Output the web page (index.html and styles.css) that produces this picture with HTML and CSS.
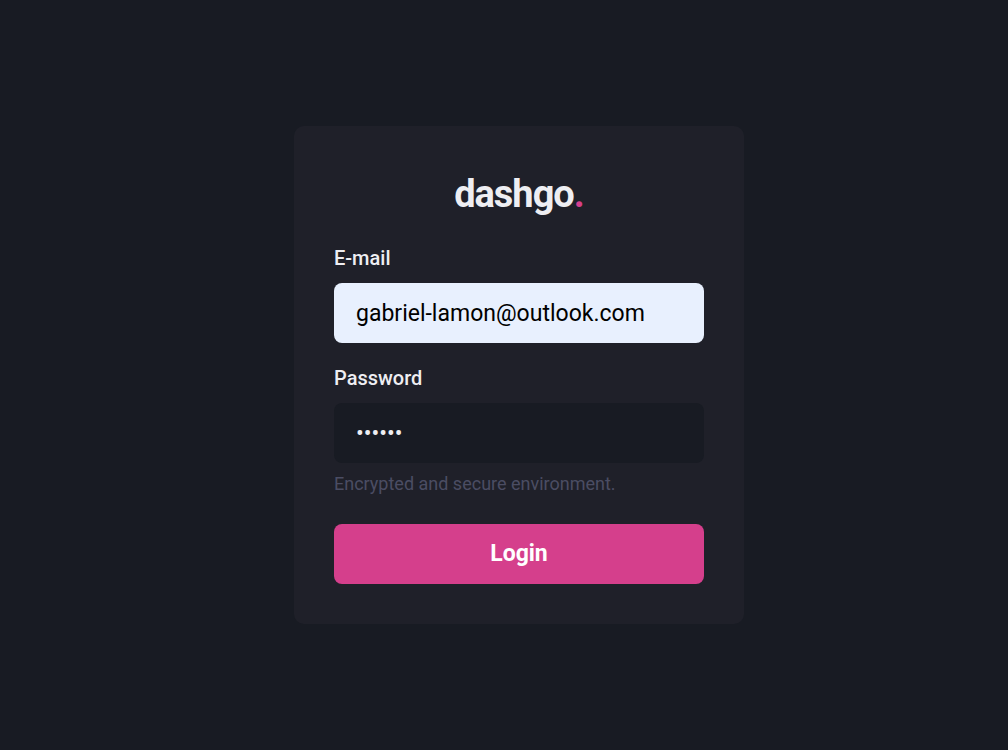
FILE: index.html
```html
<!DOCTYPE html>
<html lang="en">
<head>
<meta charset="utf-8">
<meta name="viewport" content="width=device-width, initial-scale=1">
<title>dashgo</title>
<link rel="stylesheet" href="styles.css">
</head>
<body>
<main class="page">
  <form class="card">
    <h1 class="logo">dashgo<span class="logo-dot">.</span></h1>
    <div class="field">
      <label class="label" for="email">E-mail</label>
      <input class="input input-filled" id="email" type="email" value="gabriel-lamon@outlook.com">
    </div>
    <div class="field">
      <label class="label" for="password">Password</label>
      <input class="input" id="password" type="password" value="secret" aria-describedby="hint">
      <p class="hint" id="hint">Encrypted and secure environment.</p>
    </div>
    <button class="button" type="submit">Login</button>
  </form>
</main>
</body>
</html>
```
FILE: styles.css
```css
* {
  box-sizing: border-box;
}

body {
  margin: 0;
  background: #181b23;
  color: #eeeef2;
  font-family: Roboto, "Liberation Sans", sans-serif;
  font-size: 20px;
  line-height: 30px;
}

.page {
  display: flex;
  align-items: center;
  justify-content: center;
  min-height: 100vh;
  padding-left: 30px;
}

.card {
  display: flex;
  flex-direction: column;
  width: 100%;
  max-width: 450px;
  padding: 40px;
  border-radius: 10px;
  background: #1f2029;
}

.logo {
  margin: 0 0 20px;
  font-size: 38px;
  font-weight: 700;
  line-height: 57px;
  letter-spacing: -1px;
  text-align: center;
}

.logo-dot {
  color: #d53f8c;
}

.field {
  display: flex;
  flex-direction: column;
  margin-bottom: 20px;
}

.label {
  margin-bottom: 10px;
  font-weight: 500;
}

.input {
  width: 100%;
  height: 60px;
  padding: 0 22px;
  border: 0;
  border-radius: 8px;
  background: #181b23;
  color: #eeeef2;
  font: inherit;
  font-size: 23px;
}

.input-filled {
  background: #e8f0fe;
  color: #000;
}

.hint {
  margin: 10px 0 0;
  color: #4b4d63;
  font-size: 18px;
  line-height: 21px;
}

.button {
  height: 60px;
  margin-top: 10px;
  border: 0;
  border-radius: 8px;
  background: #d53f8c;
  color: #fff;
  font: inherit;
  font-size: 23px;
  font-weight: 700;
}
```
